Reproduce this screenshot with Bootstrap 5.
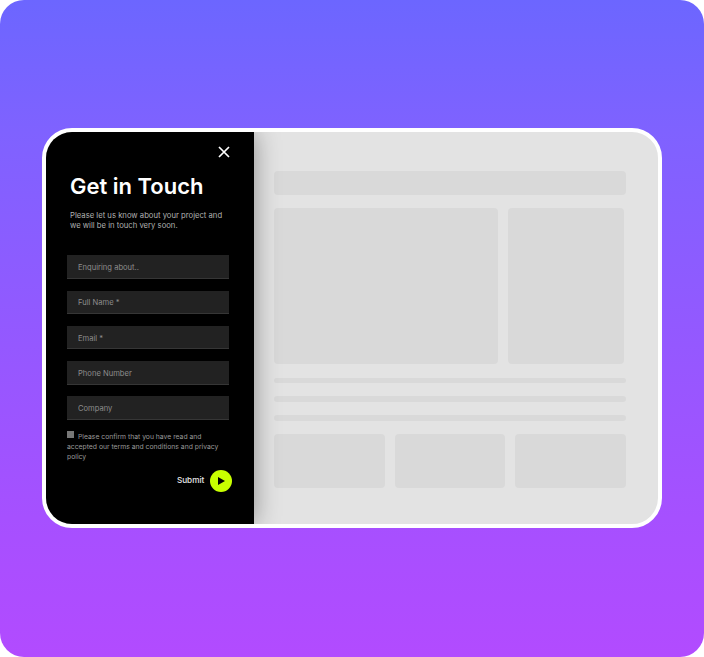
<!DOCTYPE html>
<html lang="en">
<head>
<meta charset="utf-8">
<title>Get in Touch</title>
<link href="https://cdn.jsdelivr.net/npm/bootstrap@5.3.0/dist/css/bootstrap.min.css" rel="stylesheet">
<style>
html,body{margin:0;background:#fff;}
body{width:704px;height:657px;overflow:hidden;font-family:Inter,"Noto Sans","Liberation Sans",sans-serif;}
.stage{width:704px;height:657px;border-radius:24px;background:linear-gradient(180deg,#6c66ff 0%,#7f62ff 20%,#a84fff 82%,#b24bff 100%);padding:128px 42px 0;}
.frame{width:620px;height:400px;border:4px solid #fff;border-radius:30px;overflow:hidden;background:#e3e3e3;}
.side{width:208px;flex:none;background:#000;color:#fff;box-shadow:0 0 24px rgba(0,0,0,.38);position:relative;z-index:1;padding:0 24.7px 0 21px;}
.closer{height:40px;padding:13px 0 0 0;justify-content:flex-end;margin-right:-1.5px;}
.closer svg{display:block;width:14px;height:14px;}
.heading{font-size:22px;line-height:28px;font-weight:600;margin:0 0 0 3px;color:#fff;}
.intro{font-size:7.7px;line-height:10.2px;color:#b0b0b0;margin:11px 0 0 3px;}
.fields{margin-top:24px;gap:11.5px;}
.fields .form-control{height:23.7px;padding:2px 11px 0;border:0;border-bottom:1px solid #363636;border-radius:0;background:#222;color:#999;font-size:7.6px;box-shadow:none;}
.fields .form-control::placeholder{color:#8d8d8d;opacity:1;}
.agree{font-size:6.8px;line-height:10.1px;color:#9a9a9a;margin:11px 2px 0 0;}
.tick{display:inline-block;width:7px;height:7px;background:#777;margin-right:4px;vertical-align:1px;}
.send{gap:6px;margin:7.5px -3px 0 0;}
.send-label{font-size:8.2px;font-weight:500;color:#e8e8e8;}
.send-dot{width:22px;height:22px;border-radius:50%;background:#c8ff00;}
.send-dot svg{width:7px;height:8px;display:block;margin-left:1px;}
.mock{padding:38.5px 0 0 20px;width:372px;}
.blk{background:#d9d9d9;border-radius:4px;}
.blk-top{height:24px;width:352px;}
.blk-row{margin-top:13px;gap:10px;}
.blk-big{width:224px;height:156.5px;}
.blk-side{width:116px;height:156.5px;}
.blk-line{height:5.5px;width:352px;border-radius:3px;margin-top:13.3px;}
.blk-line-first{margin-top:13.5px;}
.blk-low{margin-top:13px;gap:10px;}
.blk-card{width:111px;height:54px;}
</style>
</head>
<body>
<div class="stage">
  <div class="frame d-flex">
    <aside class="side">
      <div class="closer d-flex">
        <svg viewBox="0 0 14 14" aria-label="Close"><path d="M2 2L12 12M12 2L2 12" stroke="#fff" stroke-width="1.7" fill="none"/></svg>
      </div>
      <h1 class="heading">Get in Touch</h1>
      <p class="intro">Please let us know about your project and<br>we will be in touch very soon.</p>
      <form class="fields d-flex flex-column">
        <input class="form-control" type="text" placeholder="Enquiring about..">
        <input class="form-control" type="text" placeholder="Full Name *">
        <input class="form-control" type="text" placeholder="Email *">
        <input class="form-control" type="text" placeholder="Phone Number">
        <input class="form-control" type="text" placeholder="Company">
      </form>
      <div class="agree"><span class="tick"></span>Please confirm that you have read and accepted our terms and conditions and privacy policy</div>
      <div class="send d-flex align-items-center justify-content-end">
        <span class="send-label">Submit</span>
        <span class="send-dot d-flex align-items-center justify-content-center">
          <svg viewBox="0 0 7 8"><path d="M0 0L7 4L0 8Z" fill="#000"/></svg>
        </span>
      </div>
    </aside>
    <main class="mock">
      <div class="blk blk-top"></div>
      <div class="blk-row d-flex">
        <div class="blk blk-big"></div>
        <div class="blk blk-side"></div>
      </div>
      <div class="blk blk-line blk-line-first"></div>
      <div class="blk blk-line"></div>
      <div class="blk blk-line"></div>
      <div class="blk-low d-flex">
        <div class="blk blk-card"></div>
        <div class="blk blk-card"></div>
        <div class="blk blk-card"></div>
      </div>
    </main>
  </div>
</div>
<script src="https://cdn.jsdelivr.net/npm/bootstrap@5.3.0/dist/js/bootstrap.bundle.min.js"></script>
</body>
</html>
